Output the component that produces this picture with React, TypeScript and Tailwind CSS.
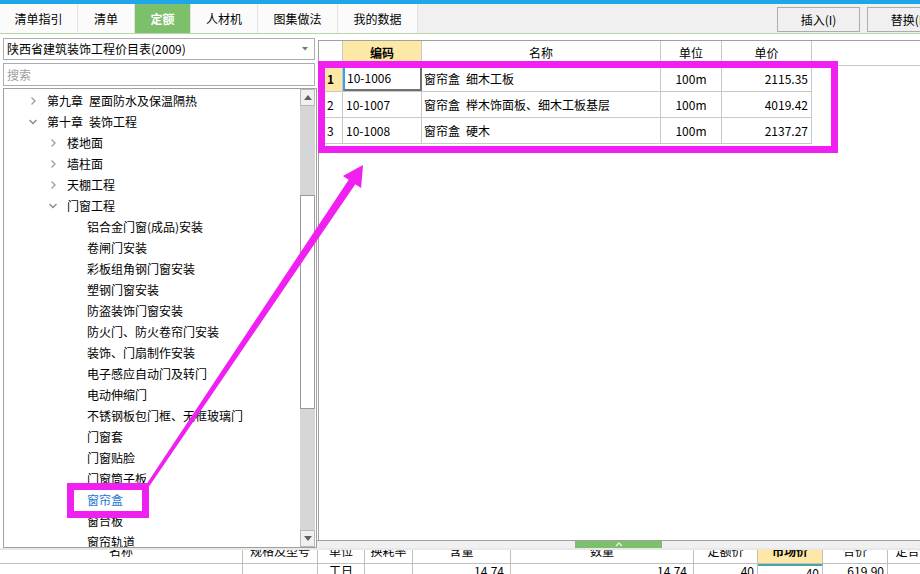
import React from 'react'

type TreeRow = { text: string; level: number; state?: 'open' | 'closed'; selected?: boolean }

const tree: TreeRow[] = [
  { text: '第九章\u2002屋面防水及保温隔热', level: 1, state: 'closed' },
  { text: '第十章\u2002装饰工程', level: 1, state: 'open' },
  { text: '楼地面', level: 2, state: 'closed' },
  { text: '墙柱面', level: 2, state: 'closed' },
  { text: '天棚工程', level: 2, state: 'closed' },
  { text: '门窗工程', level: 2, state: 'open' },
  { text: '铝合金门窗(成品)安装', level: 3 },
  { text: '卷闸门安装', level: 3 },
  { text: '彩板组角钢门窗安装', level: 3 },
  { text: '塑钢门窗安装', level: 3 },
  { text: '防盗装饰门窗安装', level: 3 },
  { text: '防火门、防火卷帘门安装', level: 3 },
  { text: '装饰、门扇制作安装', level: 3 },
  { text: '电子感应自动门及转门', level: 3 },
  { text: '电动伸缩门', level: 3 },
  { text: '不锈钢板包门框、无框玻璃门', level: 3 },
  { text: '门窗套', level: 3 },
  { text: '门窗贴脸', level: 3 },
  { text: '门窗筒子板', level: 3 },
  { text: '窗帘盒', level: 3, selected: true },
  { text: '窗台板', level: 3 },
  { text: '窗帘轨道', level: 3 },
]

const rows = [
  { no: '1', code: '10-1006', name: '窗帘盒\u2002细木工板', unit: '100m', price: '2115.35' },
  { no: '2', code: '10-1007', name: '窗帘盒\u2002榉木饰面板、细木工板基层', unit: '100m', price: '4019.42' },
  { no: '3', code: '10-1008', name: '窗帘盒\u2002硬木', unit: '100m', price: '2137.27' },
]

const tabs = [
  { label: '清单指引', w: 'w-[78px]' },
  { label: '清单', w: 'w-[57px]' },
  { label: '定额', w: 'w-[56px]', active: true },
  { label: '人材机', w: 'w-[67px]' },
  { label: '图集做法', w: 'w-[80px]' },
  { label: '我的数据', w: 'w-[80px]' },
]

function Chevron({ open }: { open: boolean }) {
  return (
    <svg width="14" height="10" viewBox="0 0 14 10" className="shrink-0">
      {open ? (
        <polyline points="3.5,3 7,6.5 10.5,3" fill="none" stroke="#8a8a8a" strokeWidth="1.4" />
      ) : (
        <polyline points="5.5,1.5 9,5 5.5,8.5" fill="none" stroke="#a0a0a0" strokeWidth="1.4" />
      )}
    </svg>
  )
}

export default function App() {
  return (
    <div className="relative w-[920px] h-[574px] overflow-hidden bg-white text-[12px] text-black font-['Noto_Sans_CJK_SC',sans-serif]">
      <div className="h-[4px] bg-[#1ea5ea]" />

      {/* tab bar */}
      <div className="flex h-[30px] bg-[#f0f0f0] border-b border-[#b5d6a5] overflow-hidden">
        {tabs.map(t => (
          <div
            key={t.label}
            className={`${t.w} shrink-0 flex items-center justify-center border-r border-[#dfe6da] ${
              t.active ? 'bg-[#7cc06b] text-white font-bold' : 'bg-[#fbfbfb]'
            }`}
          >
            {t.label}
          </div>
        ))}
        <div className="ml-[359px] mt-[3px] flex gap-[7px] shrink-0">
          <div className="w-[83px] h-[25px] shrink-0 border border-[#adadad] bg-[#f0f0f0] flex items-center justify-center">插入(I)</div>
          <div className="w-[83px] h-[25px] shrink-0 border border-[#adadad] bg-[#f0f0f0] flex items-center justify-center">替换(I)</div>
        </div>
      </div>

      {/* main */}
      <div className="flex h-[514px]">
        {/* left panel */}
        <div className="w-[317px] shrink-0 flex flex-col pl-[3px] pt-[4px]">
          <div className="h-[22px] w-[312px] border border-[#abadb3] flex items-center pl-[3px] pr-[6px]">
            <span className="flex-1">陕西省建筑装饰工程价目表(2009)</span>
            <svg width="6" height="4" viewBox="0 0 6 4"><polygon points="0,0 6,0 3,3.5" fill="#777" /></svg>
          </div>
          <div className="mt-[3px] h-[23px] w-[312px] border border-[#abadb3] flex items-center pl-[3px] text-[#a0a0a0]">搜索</div>
          <div className="mt-[2px] flex-1 w-[314px] border border-[#a0a0a0] flex overflow-hidden">
            <div className="flex-1 pt-[1px] overflow-hidden">
              {tree.map(r => (
                <div
                  key={r.text}
                  className={`h-[21px] flex items-center whitespace-nowrap ${
                    r.level === 1 ? 'pl-[22px]' : r.level === 2 ? 'pl-[42px]' : 'pl-[62px]'
                  } ${r.selected ? 'text-[#1e78d2]' : ''}`}
                >
                  {r.state ? <Chevron open={r.state === 'open'} /> : <span className="w-[14px] shrink-0" />}
                  <span className="ml-[7px]">{r.text}</span>
                </div>
              ))}
            </div>
            <div className="w-[15px] shrink-0 mr-[1px] bg-[#d6d6d6] flex flex-col">
              <div className="h-[17px] bg-[#f0f0f0] border border-[#b8b8b8] flex items-center justify-center">
                <svg width="8" height="5" viewBox="0 0 8 5"><polygon points="0,5 8,5 4,0" fill="#606060" /></svg>
              </div>
              <div className="h-[89px]" />
              <div className="h-[214px] bg-white border border-[#9a9a9a]" />
              <div className="flex-1" />
              <div className="h-[17px] bg-[#f0f0f0] border border-[#b8b8b8] flex items-center justify-center">
                <svg width="8" height="5" viewBox="0 0 8 5"><polygon points="0,0 8,0 4,5" fill="#606060" /></svg>
              </div>
            </div>
          </div>
        </div>

        {/* right panel */}
        <div className="flex-1 flex flex-col">
          <div className="flex-1 ml-[1px] mt-[6px] border-l border-t border-[#a0a0a0]">
            <div className="flex h-[25px] border-b border-[#c8c8c8]">
              <div className="w-[24px] border-r border-[#c8c8c8]" />
              <div className="w-[79px] border-r border-[#c8c8c8] bg-[#fde8a6] font-bold flex items-center justify-center">编码</div>
              <div className="w-[239px] border-r border-[#c8c8c8] flex items-center justify-center">名称</div>
              <div className="w-[61px] border-r border-[#c8c8c8] flex items-center justify-center">单位</div>
              <div className="w-[90px] border-r border-[#c8c8c8] flex items-center justify-center">单价</div>
            </div>
            {rows.map((r, i) => (
              <div key={r.no} className="flex h-[26px] w-[493px] border-b border-[#c8c8c8]">
                <div
                  className={`w-[24px] border-r border-[#c8c8c8] flex items-center pl-[8px] ${
                    i === 0 ? 'bg-[#fde8a6] font-bold' : ''
                  }`}
                >
                  {r.no}
                </div>
                <div
                  className={`w-[79px] flex items-center pl-[2px] ${
                    i === 0 ? 'border-l-2 border-l-[#3a9ee8] border-r-2 border-r-[#707070] border-b-2 border-b-[#707070]' : 'border-r border-[#c8c8c8] pl-[3px]'
                  }`}
                >
                  {r.code}
                </div>
                <div className="w-[239px] border-r border-[#c8c8c8] flex items-center pl-[2px]">{r.name}</div>
                <div className="w-[61px] border-r border-[#c8c8c8] flex items-center justify-center">{r.unit}</div>
                <div className="w-[90px] border-r border-[#c8c8c8] flex items-center justify-end pr-[3px]">{r.price}</div>
              </div>
            ))}
          </div>
          <div className="h-[8px] border-t border-[#a0a0a0] bg-[#f0f0f0] flex justify-center">
            <div className="w-[87px] h-[7px] bg-[#7cc06b] flex items-start justify-center">
              <svg width="10" height="6" viewBox="0 0 10 6"><polyline points="2,5 5,2 8,5" fill="none" stroke="#e8f5e2" strokeWidth="1.3" /></svg>
            </div>
          </div>
        </div>
      </div>

      {/* bottom grid */}
      <div className="h-[2px] bg-[#e8e8e8]" />
      <div className="flex h-[14px] border-b border-[#c0c0c0] overflow-hidden leading-[12px]">
        {[
          ['名称', 'w-[243px]'],
          ['规格及型号', 'w-[75px]'],
          ['单位', 'w-[47px]'],
          ['换耗率', 'w-[48px]'],
          ['含量', 'w-[98px]'],
          ['数量', 'w-[183px]'],
          ['定额价', 'w-[64px]'],
          ['市场价', 'w-[65px]'],
          ['合价', 'w-[65px]'],
          ['定合', 'w-[40px]'],
        ].map(([t, w]) => (
          <div
            key={t}
            className={`${w} shrink-0 border-r border-[#c0c0c0] text-center ${
              t === '市场价' ? 'bg-[#fde8a6] font-bold' : ''
            }`}
          >
            <div className="-mt-[5px]">{t}</div>
          </div>
        ))}
      </div>
      <div className="flex h-[10px] overflow-hidden leading-[14px]">
        <div className="w-[243px] shrink-0 border-r border-[#c0c0c0]" />
        <div className="w-[75px] shrink-0 border-r border-[#c0c0c0]" />
        <div className="w-[47px] shrink-0 border-r border-[#c0c0c0] text-center">工日</div>
        <div className="w-[48px] shrink-0 border-r border-[#c0c0c0]" />
        <div className="w-[98px] shrink-0 border-r border-[#c0c0c0] text-right pr-[6px]">14.74</div>
        <div className="w-[183px] shrink-0 border-r border-[#c0c0c0] text-right pr-[6px]">14.74</div>
        <div className="w-[64px] shrink-0 border-r border-[#c0c0c0] text-right pr-[3px]">40</div>
        <div className="w-[65px] shrink-0 border-r border-[#c0c0c0] border-t-2 border-t-[#4aa3a8] text-right pr-[3px]">40</div>
        <div className="w-[65px] shrink-0 border-r border-[#c0c0c0] text-right pr-[3px]">619.90</div>
        <div className="w-[40px] shrink-0" />
      </div>

      {/* annotations */}
      <div className="absolute left-[318px] top-[61px] w-[520px] h-[92px] border-[7px] border-[#f020f0] pointer-events-none" />
      <div className="absolute left-[67px] top-[483px] w-[82px] h-[35px] border-[7px] border-[#f020f0] pointer-events-none" />
      <svg className="absolute left-0 top-0 pointer-events-none" width="920" height="574" viewBox="0 0 920 574">
        <polygon
          points="146.6,484 348.7,179.8 342.9,175.9 363,165 361.1,188.1 355.3,184.2 149.4,486"
          fill="#f020f0"
        />
      </svg>
    </div>
  )
}
